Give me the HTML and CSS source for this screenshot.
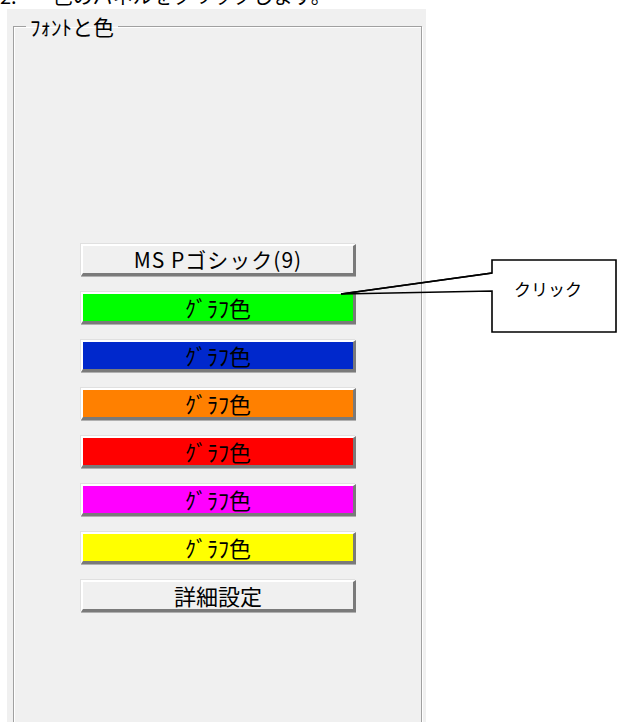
FILE: index.html
```html
<!DOCTYPE html>
<html lang="ja">
	<head>
		<meta charset="utf-8">
		<title>フォントと色</title>
		<link rel="stylesheet" href="styles.css">
	</head>
	<body>
		<div class="caption">
			<p>2.<span class="gap"></span>色のパネルをクリックします。</p>
		</div>
		<div class="panel">
			<fieldset class="group">
				<legend>ﾌｫﾝﾄと色</legend>
				<div class="buttons">
					<div class="btn font">MS Pゴシック(9)</div>
					<div class="btn green">ｸﾞﾗﾌ色</div>
					<div class="btn blue">ｸﾞﾗﾌ色</div>
					<div class="btn orange">ｸﾞﾗﾌ色</div>
					<div class="btn red">ｸﾞﾗﾌ色</div>
					<div class="btn magenta">ｸﾞﾗﾌ色</div>
					<div class="btn yellow">ｸﾞﾗﾌ色</div>
					<div class="btn">詳細設定</div>
				</div>
			</fieldset>
		</div>

		<!-- 吹き出し -->
		<div class="callout">
			<svg width="287" height="85" viewBox="0 0 287 85">
				<rect x="162" y="5" width="124" height="72" fill="#fff" stroke="none"/>
				<path d="M162,18 L162,5 L286,5 L286,77 L162,77 L162,36 L11,39 Z" fill="none" stroke="#000" stroke-width="1.6"/>
				<path d="M11,39 L162,18" fill="none" stroke="#000" stroke-width="1.6"/>
			</svg>
			<span class="callout-text">クリック</span>
		</div>
	</body>
</html>
```

FILE: styles.css
```css
* {
	margin: 0px;
	padding: 0px;
}

body {
	width: 617px;
	height: 722px;
	overflow: hidden;
	position: relative;
	background-color: #fff;
	font-family: "Noto Sans CJK JP", "Liberation Sans", sans-serif;
	color: #000;
}

/* 上で切れている説明文 */
.caption {
	height: 9px;
	overflow: hidden;
}

.caption p {
	font-size: 20px;
	line-height: 20px;
	margin-top: -14px;
	white-space: nowrap;
}

.caption .gap {
	display: inline-block;
	width: 36px;
}

.panel {
	margin-left: 7px;
	width: 419px;
	height: 713px;
	background-color: #f0f0f0;
	overflow: hidden;
}

.group {
	margin: 5px 0 0 6px;
	box-sizing: border-box;
	width: 409px;
	height: 760px;
	border: 1px solid #a0a0a0;
	box-shadow: inset 1px 1px 0 #fff, 1px 1px 0 #fff;
	padding: 0 0 0 12px;
}

.group legend {
	font-size: 21px;
	line-height: 24px;
	padding: 0 4px;
}

.buttons {
	display: flex;
	flex-direction: column;
	gap: 16px;
	width: 275px;
	margin: 206px 0 0 55px;
}

.btn {
	height: 32px;
	box-sizing: border-box;
	border-style: solid;
	border-width: 2px 3px 3px 2px;
	border-color: #fff #7a7a7a #7a7a7a #fff;
	box-shadow: -1px -1px 0 #e0e0e0, 0 1px 0 #b0b0b0;
	background-color: #f0f0f0;
	font-size: 22px;
	line-height: 27px;
	text-align: center;
	white-space: nowrap;
}

.font {
	font-size: 21px;
	letter-spacing: 1px;
}

.green { background-color: #00ff00; }
.blue { background-color: #0028cc; }
.orange { background-color: #ff8000; }
.red { background-color: #ff0000; }
.magenta { background-color: #ff00ff; }
.yellow { background-color: #ffff00; }

.callout {
	position: absolute;
	left: 330px;
	top: 255px;
	width: 287px;
	height: 85px;
}

.callout svg {
	display: block;
}

.callout-text {
	position: absolute;
	left: 184px;
	top: 22px;
	font-size: 17px;
	line-height: 24px;
}
```
